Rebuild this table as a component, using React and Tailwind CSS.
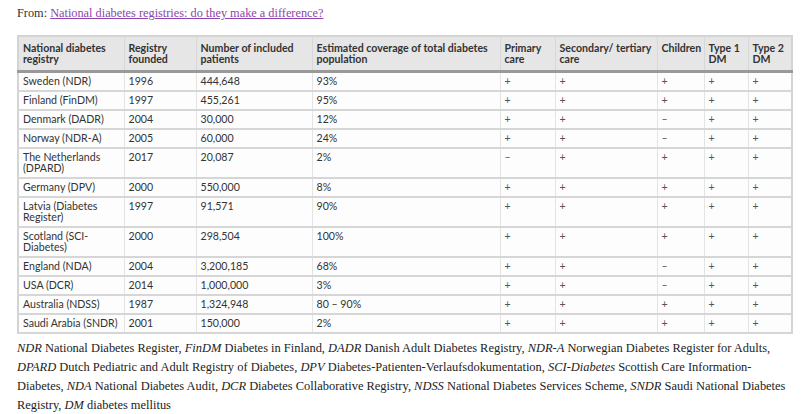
import React from "react";

const rows = [
  ["Sweden (NDR)", "1996", "444,648", "93%", "+", "+", "+", "+", "+"],
  ["Finland (FinDM)", "1997", "455,261", "95%", "+", "+", "+", "+", "+"],
  ["Denmark (DADR)", "2004", "30,000", "12%", "+", "+", "–", "+", "+"],
  ["Norway (NDR-A)", "2005", "60,000", "24%", "+", "+", "–", "+", "+"],
  ["The Netherlands (DPARD)", "2017", "20,087", "2%", "–", "+", "+", "+", "+"],
  ["Germany (DPV)", "2000", "550,000", "8%", "+", "+", "+", "+", "+"],
  ["Latvia (Diabetes Register)", "1997", "91,571", "90%", "+", "+", "+", "+", "+"],
  ["Scotland (SCI-Diabetes)", "2000", "298,504", "100%", "+", "+", "+", "+", "+"],
  ["England (NDA)", "2004", "3,200,185", "68%", "+", "+", "–", "+", "+"],
  ["USA (DCR)", "2014", "1,000,000", "3%", "+", "+", "–", "+", "+"],
  ["Australia (NDSS)", "1987", "1,324,948", "80 – 90%", "+", "+", "+", "+", "+"],
  ["Saudi Arabia (SNDR)", "2001", "150,000", "2%", "+", "+", "+", "+", "+"],
];

const heads = [
  "National diabetes registry",
  "Registry founded",
  "Number of included patients",
  "Estimated coverage of total diabetes population",
  "Primary care",
  "Secondary/\u00a0tertiary care",
  "Children",
  "Type 1 DM",
  "Type 2 DM",
];

const widths = [106, 72, 116, 188, 55, 102, 47, 44, 44];

export default function App() {
  return (
    <div className="w-[809px] h-[414px] bg-white overflow-hidden px-[17px] pt-[4px]">
      <p className="text-[12.3px] leading-[18px] text-[#333] font-['Liberation_Serif',serif]">
        From:{" "}
        <a href="#" className="text-[#8e44ad] underline">
          National diabetes registries: do they make a difference?
        </a>
      </p>
      <table className="mt-[13px] w-[774px] table-fixed border-collapse border-2 border-[#d4d4d4] text-[10.6px] leading-[11px] text-[#333] font-['Lato',sans-serif]">
        <colgroup>
          {widths.map((w, i) => (
            <col key={i} style={{ width: w }} />
          ))}
        </colgroup>
        <thead>
          <tr className="bg-[#e6e6e6] border-b-[3px] border-[#999]">
            {heads.map((h) => (
              <th key={h} className="text-left align-top font-bold px-[4px] py-[5.5px] border-x border-[#d8d8d8]">
                {h}
              </th>
            ))}
          </tr>
        </thead>
        <tbody>
          {rows.map((r) => (
            <tr key={r[0]} className="bg-[#fdfdfd] border-b-2 border-[#d6d6d6]">
              {r.map((c, i) => (
                <td
                  key={i}
                  className={
                    "align-top px-[4px] py-[3px] border-x border-[#e4e4e4] " +
                    (i > 3 ? "text-[#555]" : "")
                  }
                >
                  {c}
                </td>
              ))}
            </tr>
          ))}
        </tbody>
      </table>
      <p className="mt-[5px] w-[790px] whitespace-nowrap text-[12.45px] leading-[19px] text-[#222] font-['Liberation_Serif',serif]">
        <i>NDR</i> National Diabetes Register, <i>FinDM</i> Diabetes in Finland, <i>DADR</i> Danish Adult Diabetes Registry,{" "}
        <i>NDR-A</i> Norwegian Diabetes Register for Adults,
        <br />
        <i>DPARD</i> Dutch Pediatric and Adult Registry of Diabetes, <i>DPV</i> Diabetes-Patienten-Verlaufsdokumentation,{" "}
        <i>SCI-Diabetes</i> Scottish Care Information-
        <br />
        Diabetes, <i>NDA</i> National Diabetes Audit, <i>DCR</i> Diabetes Collaborative Registry, <i>NDSS</i> National
        Diabetes Services Scheme, <i>SNDR</i> Saudi National Diabetes
        <br />
        Registry, <i>DM</i> diabetes mellitus
      </p>
    </div>
  );
}
